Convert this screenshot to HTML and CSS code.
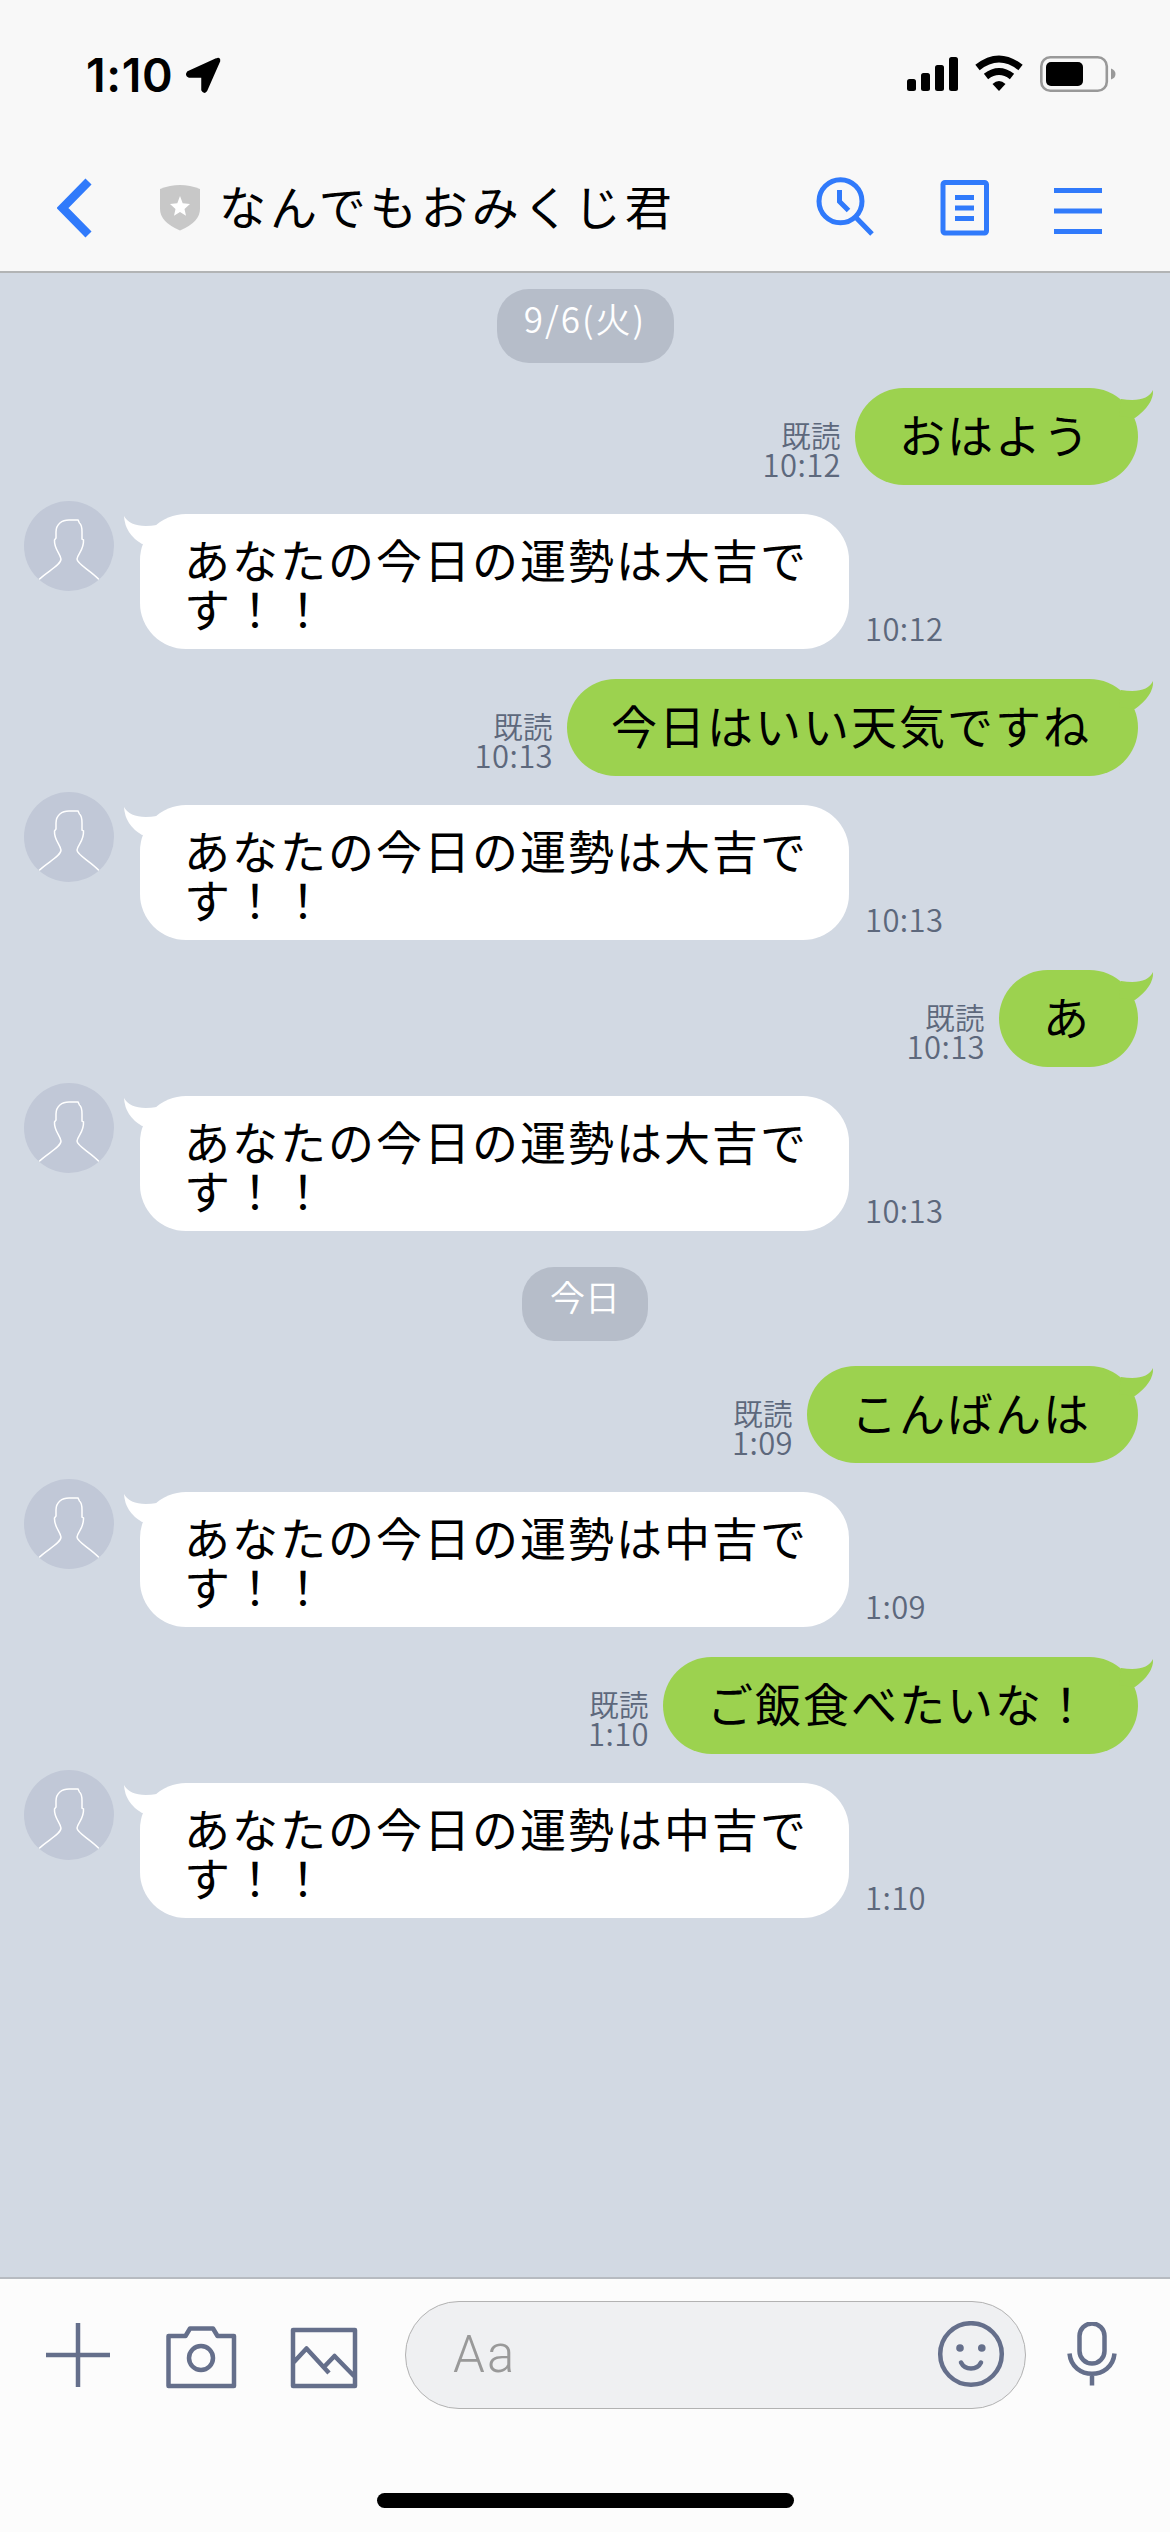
FILE: index.html
```html
<!DOCTYPE html>
<html lang="ja">
<head>
<meta charset="utf-8">
<title>なんでもおみくじ君</title>
<link rel="stylesheet" href="styles.css">
</head>
<body>
<svg class="defs" width="0" height="0">
  <symbol id="tail-r" viewBox="0 0 36 30"><path d="M2 9Q28 13 34 0Q35 14 16 28L0 26Z"/></symbol>
  <symbol id="tail-l" viewBox="0 0 36 30"><path d="M34 9Q8 13 1 0Q2 18 19 28L36 26Z"/></symbol>
  <symbol id="person" viewBox="0 0 90 90">
    <path d="M15 78.500C24 70 37 64 37 58C36 52 30 48 30.500 39L32 37V31C32 23 38 19 45 19H54L55.500 22C58 24 58 28 58 31V38L59.500 39C60 49 54 52 53 58C53 63 66 69 75 78.500" fill="none" stroke="#fff" stroke-width="1.500"/>
  </symbol>
</svg>
<div class="screen">
  <header class="header">
    <div class="status">
      <span class="clock">1:10</span>
      <svg class="location" width="36" height="37" viewBox="0 0 36 37"><path d="M31.500 2.500L3 15.500Q1 18 4 19.500H17.500V33Q19 36 21 33.500L34 4Q34.500 1 31.500 2.500Z" stroke="#000" stroke-width="2.500" stroke-linejoin="round"/></svg>
      <svg class="signals" width="210" height="40" viewBox="906 55 210 40">
        <rect x="907" y="79" width="9" height="12" rx="2.500"/><rect x="921" y="73" width="9" height="18" rx="2.500"/><rect x="935" y="65" width="9" height="26" rx="2.500"/><rect x="949" y="57" width="9" height="34" rx="2.500"/>
        <path d="M977.500 67.500Q999 50.500 1020.500 67.500M986 76.500Q999 66.500 1012 76.500" fill="none" stroke="#000" stroke-width="7"/>
        <path d="M992.500 84Q999 78 1005.500 84L999 91Z"/>
        <rect x="1041.300" y="57.300" width="65.500" height="33.500" rx="9" fill="none" stroke="#999" stroke-width="2.600"/>
        <rect x="1046" y="62" width="37" height="24" rx="5"/>
        <path d="M1111 68.500Q1115.500 70 1115.500 74Q1115.500 78 1111 79.500Z" fill="#999"/>
      </svg>
    </div>
    <div class="nav">
      <svg class="back" width="36" height="60" viewBox="57 178 36 60"><path d="M88.500 181.500L62.500 208L88.500 234.500" fill="none" stroke="#307afb" stroke-width="8.500"/></svg>
      <svg class="shield" width="40" height="46" viewBox="160 184 40 46"><path d="M160 188Q180 180 200 188V208Q200 221 180 229.500Q160 221 160 208Z" fill="#c8c8c8"/><path d="M180 195L182.700 202.300L190 203L184.500 208L186 214.800L180 211L174 214.800L175.500 208L170 203L177.300 202.300Z" fill="#fff"/></svg>
      <h1 class="title">なんでもおみくじ君</h1>
      <svg class="tools" width="288" height="62" viewBox="815 177 288 62" fill="none" stroke="#307afb" stroke-width="5">
        <circle cx="840.500" cy="201.300" r="21.500"/><path d="M839.500 190V201.500L848.500 210.500M855.500 217L872 234"/>
        <rect x="943" y="182.500" width="43.500" height="50.500" rx="2"/><path d="M955 197.500H974M955 208H974M955 218.500H974"/>
        <path d="M1054 190.500H1102M1054 211H1102M1054 231.500H1102"/>
      </svg>
    </div>
  </header>

  <main class="chat">
    <div class="date">9/6(火)</div>
    <div class="sent"><div class="meta"><span class="read">既読</span><span>10:12</span></div><div class="bubble">おはよう<svg class="tail"><use href="#tail-r"/></svg></div></div>
    <div class="received"><svg class="avatar"><use href="#person"/></svg><div class="bubble">あなたの今日の運勢は大吉です！！<svg class="tail"><use href="#tail-l"/></svg></div><div class="meta">10:12</div></div>
    <div class="sent"><div class="meta"><span class="read">既読</span><span>10:13</span></div><div class="bubble">今日はいい天気ですね<svg class="tail"><use href="#tail-r"/></svg></div></div>
    <div class="received"><svg class="avatar"><use href="#person"/></svg><div class="bubble">あなたの今日の運勢は大吉です！！<svg class="tail"><use href="#tail-l"/></svg></div><div class="meta">10:13</div></div>
    <div class="sent"><div class="meta"><span class="read">既読</span><span>10:13</span></div><div class="bubble">あ<svg class="tail"><use href="#tail-r"/></svg></div></div>
    <div class="received"><svg class="avatar"><use href="#person"/></svg><div class="bubble">あなたの今日の運勢は大吉です！！<svg class="tail"><use href="#tail-l"/></svg></div><div class="meta">10:13</div></div>
    <div class="date today">今日</div>
    <div class="sent"><div class="meta"><span class="read">既読</span><span>1:09</span></div><div class="bubble">こんばんは<svg class="tail"><use href="#tail-r"/></svg></div></div>
    <div class="received"><svg class="avatar"><use href="#person"/></svg><div class="bubble">あなたの今日の運勢は中吉です！！<svg class="tail"><use href="#tail-l"/></svg></div><div class="meta">1:09</div></div>
    <div class="sent"><div class="meta"><span class="read">既読</span><span>1:10</span></div><div class="bubble">ご飯食べたいな！<svg class="tail"><use href="#tail-r"/></svg></div></div>
    <div class="received"><svg class="avatar"><use href="#person"/></svg><div class="bubble">あなたの今日の運勢は中吉です！！<svg class="tail"><use href="#tail-l"/></svg></div><div class="meta">1:10</div></div>
  </main>

  <footer class="footer">
    <div class="composer">
      <svg width="314" height="70" viewBox="45 2320 314 70" fill="none" stroke="#656f8b" stroke-width="4.500" stroke-linejoin="round">
        <path d="M46 2355H110M78 2323V2387"/>
        <path d="M168.500 2336H185.500L190 2328.500H213L217.500 2336H234V2386H168.500Z"/><ellipse cx="201" cy="2358" rx="12" ry="12"/>
        <path d="M293 2330H355V2386H293ZM293 2363L306.500 2348.500L329 2373M324 2367L334.500 2356L355 2377"/>
      </svg>
      <div class="field">
        <span>Aa</span>
        <svg width="68" height="68" viewBox="936.500 2321 68 68" fill="none" stroke="#656f8b" stroke-width="4.500" stroke-linecap="round"><circle cx="970.500" cy="2354" r="30.800"/><path d="M960.500 2362.500C964.500 2370.500 976.500 2370.500 980.500 2362.500"/><g fill="#656f8b" stroke="none"><circle cx="959.500" cy="2348" r="3.800"/><circle cx="981.300" cy="2348" r="3.800"/></g></svg>
      </div>
      <svg width="50" height="66" viewBox="1067 2321.500 50 66" fill="none" stroke="#656f8b" stroke-width="4.500"><rect x="1079.500" y="2323" width="25" height="40" rx="12.500"/><path d="M1069.500 2353C1072 2380 1112 2380 1114.500 2353M1092 2374V2385"/></svg>
    </div>
    <div class="home"></div>
  </footer>
</div>
</body>
</html>
```
FILE: styles.css
```css
* { box-sizing: border-box; }
body { margin: 0; font-family: "Noto Sans CJK JP", sans-serif; font-weight: 350; }
svg { display: block; flex: none; }
.defs { position: absolute; }
.screen { width: 1170px; height: 2532px; display: flex; flex-direction: column; overflow: hidden; background: #d2d9e3; }

.header { height: 273px; flex: none; background: #f8f8f8; border-bottom: 2px solid #b2b4b5; }
.status { height: 150px; display: flex; align-items: center; padding: 0 54px 0 86px; }
.clock { font: 600 46.500px/48px Inter, sans-serif; letter-spacing: 0.6px; width: 99px; white-space: nowrap; }
.signals { margin-left: auto; }
.nav { height: 116px; display: flex; align-items: center; padding: 0 67px 0 57px; }
.shield { margin-left: 67px; margin-right: 19px; }
.title { margin: 0; font-size: 47px; font-weight: 400; line-height: 60px; letter-spacing: 4px; white-space: nowrap; padding-bottom: 6px; }
.tools { margin-left: auto; }

.chat { flex: 1; display: flex; flex-direction: column; padding-top: 16px; }
.date { align-self: center; height: 74px; width: 177px; margin-bottom: 25px; padding-top: 9px; border-radius: 32px; background: #b6bdc9; color: #fff; font-size: 35px; line-height: 40px; letter-spacing: 2px; text-align: center; white-space: nowrap; }
.today { width: 126px; margin-top: 6px; letter-spacing: 0; }
.bubble { position: relative; font-size: 46px; font-weight: 400; line-height: 49px; letter-spacing: 2px; color: #000; }
.meta { align-self: flex-end; display: flex; flex-direction: column; align-items: flex-end; color: #5d687c; font-size: 31px; line-height: 30px; letter-spacing: 0.4px; white-space: nowrap; }
.read { font-size: 29.500px; }

.sent { height: 97px; display: flex; justify-content: flex-end; padding-right: 32px; margin-bottom: 29px; }
.sent .meta { margin: 0 14px 6px 0; }
.sent .bubble { height: 97px; padding: 21px 47px 0 44px; border-radius: 48.500px; background: #9cd24f; white-space: nowrap; }
.tail { position: absolute; width: 36px; height: 30px; }
.sent .tail { right: -17px; top: 2px; fill: #9cd24f; }

.received { height: 135px; display: flex; padding-left: 24px; margin-bottom: 30px; }
.avatar { width: 90px; height: 90px; margin-top: -13px; margin-right: 26px; border-radius: 50%; background: #c1c8d7; }
.received .bubble { width: 709px; padding: 20px 40px 0 44px; border-radius: 46px; background: #fff; }
.received .tail { left: -17px; top: 2px; fill: #fff; }
.received .meta { margin: 0 0 6px 16px; }

.footer { height: 255px; flex: none; background: #fcfcfc; border-top: 2px solid #b7bbc1; padding-top: 22px; }
.composer { height: 108px; display: flex; align-items: center; padding: 0 53px 0 45px; }
.field { width: 621px; height: 108px; margin-left: 46px; margin-right: 41px; padding: 0 20px 0 47px; display: flex; align-items: center; justify-content: space-between; border: 1.500px solid #b2b2b2; border-radius: 54px; background: #eff0f2; color: #999; font: 300 51px/60px Roboto, sans-serif; letter-spacing: 2px; }
.home { width: 417px; height: 15px; margin: 84px auto 0; border-radius: 8px; background: #000; }
```
